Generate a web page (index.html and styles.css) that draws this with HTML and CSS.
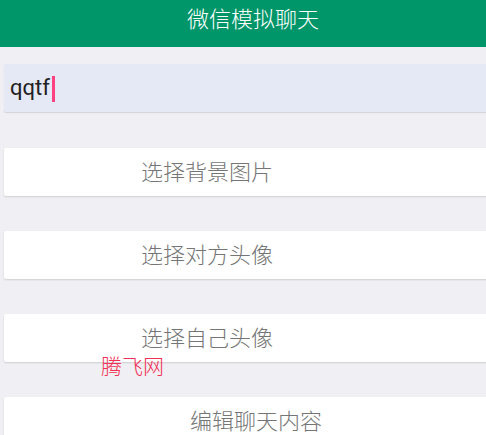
FILE: index.html
```html
<!DOCTYPE html>
<html lang="zh">
<head>
<meta charset="utf-8">
<title>微信模拟聊天</title>
<link rel="stylesheet" href="styles.css">
</head>
<body>
<div class="app">
  <header class="topbar">微信模拟聊天</header>
  <main class="content">
    <div class="field"><span class="field-text">qqtf</span><span class="cursor"></span></div>
    <div class="btn">选择背景图片</div>
    <div class="btn">选择对方头像</div>
    <div class="btn">选择自己头像</div>
    <div class="btn btn-wide">编辑聊天内容</div>
  </main>
  <div class="watermark">腾飞网</div>
</div>
</body>
</html>
```
FILE: styles.css
```css
html, body {
  margin: 0;
  padding: 0;
}
body {
  width: 486px;
  height: 435px;
  overflow: hidden;
  background: #efeff4;
  font-family: Roboto, "Noto Sans CJK SC", sans-serif;
}
.app {
  position: relative;
  height: 435px;
}
.topbar {
  height: 47px;
  background: #00966a;
  color: #ffffff;
  font-size: 22px;
  font-weight: 300;
  line-height: 40px;
  text-align: center;
  padding-left: 20px;
  box-sizing: border-box;
}
.content {
  display: flex;
  flex-direction: column;
  gap: 35px;
  padding: 17px 0 0 4px;
}
.field {
  height: 48px;
  margin-bottom: 1px;
  background: #e5e8f5;
  box-shadow: 0 1px 1px rgba(0,0,0,0.12);
  display: flex;
  align-items: center;
  padding-left: 6px;
  border-radius: 2px 0 0 2px;
  margin-right: -4px;
}
.field-text {
  font-size: 22px;
  color: #212121;
  line-height: 26px;
}
.cursor {
  width: 3px;
  height: 26px;
  background: #ff4081;
  margin-left: 2px;
  margin-top: 1px;
}
.btn {
  height: 48px;
  background: #ffffff;
  box-shadow: 0 1px 2px rgba(0,0,0,0.14);
  border-radius: 2px 0 0 2px;
  margin-right: -4px;
  font-size: 22px;
  font-weight: 300;
  line-height: 50px;
  color: #757575;
  padding-left: 137px;
}
.btn-wide {
  padding-left: 186px;
}
.watermark {
  position: absolute;
  left: 101px;
  top: 353px;
  font-size: 21px;
  font-weight: 300;
  line-height: 28px;
  color: #f22f55;
}
```
